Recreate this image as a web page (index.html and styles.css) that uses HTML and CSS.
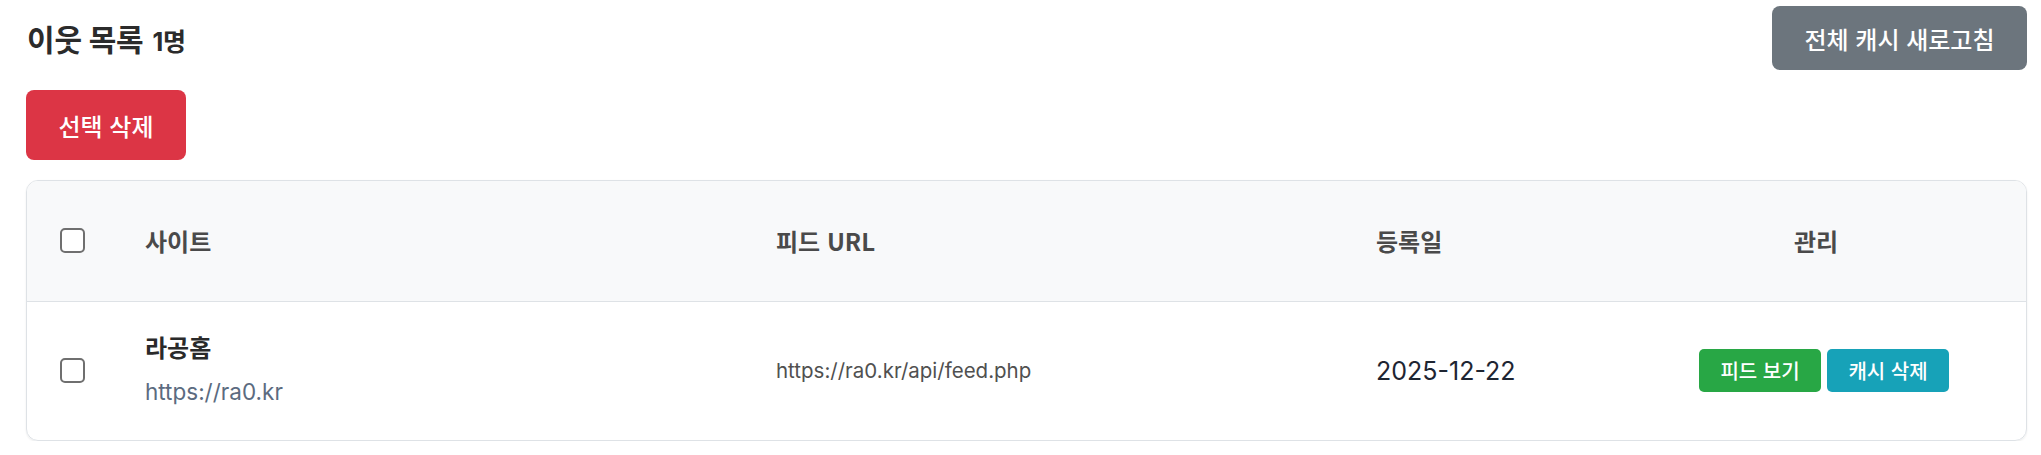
FILE: index.html
```html
<!DOCTYPE html>
<html lang="ko">
<head>
<meta charset="utf-8">
<title>이웃 목록</title>
<link rel="stylesheet" href="styles.css">
</head>
<body>
<div class="page">
  <div class="topbar">
    <h2 class="title">이웃 목록 <span class="count">1명</span></h2>
    <button class="btn btn-gray">전체 캐시 새로고침</button>
  </div>
  <div class="actions">
    <button class="btn btn-red">선택 삭제</button>
  </div>
  <div class="card">
    <table class="list">
      <colgroup>
        <col class="c-check">
        <col class="c-site">
        <col class="c-url">
        <col class="c-date">
        <col class="c-manage">
      </colgroup>
      <thead>
        <tr>
          <th><span class="check"></span></th>
          <th>사이트</th>
          <th>피드 URL</th>
          <th>등록일</th>
          <th class="center">관리</th>
        </tr>
      </thead>
      <tbody>
        <tr>
          <td><span class="check"></span></td>
          <td class="site">
            <div class="site-name">라공홈</div>
            <div class="site-url">https://ra0.kr</div>
          </td>
          <td class="feed-url">https://ra0.kr/api/feed.php</td>
          <td class="date">2025-12-22</td>
          <td class="center manage">
            <div class="mini-actions">
              <button class="btn-sm btn-green">피드 보기</button>
              <button class="btn-sm btn-teal">캐시 삭제</button>
            </div>
          </td>
        </tr>
      </tbody>
    </table>
  </div>
</div>
</body>
</html>
```

FILE: styles.css
```css
* { box-sizing: border-box; }
html, body { margin: 0; padding: 0; background: #fff; }
body {
  font-family: "Inter", "Noto Sans CJK KR", sans-serif;
  color: #212529;
}
.page {
  padding: 6px 14px 0 26px;
}
.topbar {
  display: flex;
  justify-content: space-between;
  align-items: center;
}
.title {
  margin: 0 0 0 1px;
  font-size: 30px;
  font-weight: 700;
  color: #2b2b2b;
  letter-spacing: -0.2px;
}
.count {
  font-size: 25px;
  font-weight: 700;
  margin-left: 2px;
}
.btn {
  font-family: "Noto Sans CJK KR", sans-serif;
  font-size: 24px;
  font-weight: 500;
  color: #fff;
  border: 0;
  border-radius: 8px;
  padding: 0;
}
.btn-gray {
  background: #6c757d;
  width: 255px;
  height: 64px;
}
.actions {
  margin-top: 20px;
}
.btn-red {
  background: #dc3545;
  width: 160px;
  height: 70px;
}
.card {
  margin-top: 20px;
  border: 1px solid #dee2e6;
  border-radius: 12px;
  overflow: hidden;
  box-shadow: 0 1px 2px rgba(0,0,0,0.08);
}
.list {
  width: 100%;
  border-collapse: collapse;
  table-layout: fixed;
}
.c-check { width: 85px; }
.c-site { width: 631px; }
.c-url { width: 600px; }
.c-date { width: 283px; }
.list th {
  background: #f8f9fa;
  height: 120px;
  text-align: left;
  font-family: "Noto Sans CJK KR", sans-serif;
  font-size: 24px;
  font-weight: 700;
  color: #4a4a4a;
  padding: 0 0 0 33px;
  border-bottom: 1px solid #dee2e6;
  vertical-align: middle;
}
.list td {
  height: 139px;
  padding: 0 0 0 33px;
  vertical-align: middle;
}
.list th.center { text-align: center; padding-left: 0; padding-right: 20px; }
.list td.manage { text-align: center; padding-left: 0; padding-right: 4px; }
.list td.site { padding-bottom: 4px; }
.check {
  display: block;
  width: 25px;
  height: 25px;
  border: 2px solid #6f6f6f;
  border-radius: 5px;
  background: #fff;
}
.site-name {
  font-family: "Noto Sans CJK KR", sans-serif;
  font-size: 24px;
  font-weight: 700;
  color: #2a2a2a;
  line-height: 32px;
}
.site-url {
  margin-top: 15px;
  font-size: 22.5px;
  color: #5b6b80;
  line-height: 28px;
}
.feed-url {
  font-size: 20.5px;
  color: #505050;
}
.date {
  font-size: 25px;
  color: #1e2532;
}
.mini-actions {
  display: inline-flex;
  gap: 6px;
}
.btn-sm {
  font-family: "Noto Sans CJK KR", sans-serif;
  font-size: 20px;
  font-weight: 500;
  color: #fff;
  border: 0;
  border-radius: 5px;
  width: 122px;
  height: 43px;
  padding: 0;
}
.btn-green { background: #28a745; }
.btn-teal { background: #17a2b8; }
```
